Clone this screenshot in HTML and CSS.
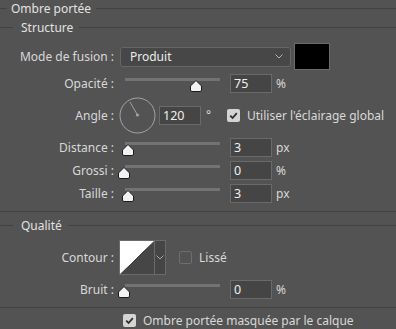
FILE: index.html
```html
<html>
  <head>
    <title>Ombre portée</title>
    <link rel="stylesheet" href="styles.css">
  </head>
  <body>
    <div class="panel">
      <div class="legend legend-main">
        <span class="legend-lead"></span><span class="legend-text">Ombre portée</span><span class="legend-line"></span>
      </div>

      <div class="legend legend-sub legend-structure">
        <span class="legend-lead"></span><span class="legend-text">Structure</span><span class="legend-line"></span>
      </div>

      <div class="row row-mode">
        <span class="label">Mode de fusion :</span>
        <div class="select">
          <span class="select-value">Produit</span>
          <svg class="chevron" width="8" height="5" viewBox="0 0 8 5"><path d="M0.5 0.5 L4 4 L7.5 0.5" fill="none" stroke="#b4b4b4" stroke-width="1"/></svg>
        </div>
        <div class="swatch"></div>
      </div>

      <div class="row row-field row-opacity">
        <span class="label">Opacité :</span>
        <div class="slider">
          <div class="track"></div>
          <span class="thumb" style="left: 65px"><svg width="12" height="12" viewBox="0 0 12 12"><path d="M6 0.5 L11.5 6 V10 Q11.5 11.5 10 11.5 H2 Q0.5 11.5 0.5 10 V6 Z" fill="#f2f2f2" stroke="#1c1c1c"/></svg></span>
        </div>
        <div class="input">75</div><span class="unit">%</span>
      </div>

      <div class="row row-angle">
        <span class="label">Angle :</span>
        <svg class="dial" width="37" height="37" viewBox="0 0 37 37">
          <circle cx="18.5" cy="18.5" r="17.5" fill="none" stroke="#a3a3a3" stroke-width="1"/>
          <line x1="18.5" y1="18" x2="11" y2="5" stroke="#a3a3a3" stroke-width="1"/>
          <circle cx="18.5" cy="18" r="1.6" fill="#a3a3a3"/>
        </svg>
        <div class="input">120</div><span class="unit unit-deg">°</span>
        <span class="check checked"><svg width="13" height="13" viewBox="0 0 13 13"><path d="M3.2 6.6 L5.6 9 L9.8 4.2" fill="none" stroke="#2e2e2e" stroke-width="1.8"/></svg></span>
        <span class="check-label">Utiliser l'éclairage global</span>
      </div>

      <div class="row row-field">
        <span class="label">Distance :</span>
        <div class="slider">
          <div class="track"></div>
          <span class="thumb" style="left: -3px"><svg width="12" height="12" viewBox="0 0 12 12"><path d="M6 0.5 L11.5 6 V10 Q11.5 11.5 10 11.5 H2 Q0.5 11.5 0.5 10 V6 Z" fill="#f2f2f2" stroke="#1c1c1c"/></svg></span>
        </div>
        <div class="input">3</div><span class="unit">px</span>
      </div>

      <div class="row row-field">
        <span class="label">Grossi :</span>
        <div class="slider">
          <div class="track"></div>
          <span class="thumb" style="left: -7px"><svg width="12" height="12" viewBox="0 0 12 12"><path d="M6 0.5 L11.5 6 V10 Q11.5 11.5 10 11.5 H2 Q0.5 11.5 0.5 10 V6 Z" fill="#f2f2f2" stroke="#1c1c1c"/></svg></span>
        </div>
        <div class="input">0</div><span class="unit">%</span>
      </div>

      <div class="row row-field">
        <span class="label">Taille :</span>
        <div class="slider">
          <div class="track"></div>
          <span class="thumb" style="left: -3px"><svg width="12" height="12" viewBox="0 0 12 12"><path d="M6 0.5 L11.5 6 V10 Q11.5 11.5 10 11.5 H2 Q0.5 11.5 0.5 10 V6 Z" fill="#f2f2f2" stroke="#1c1c1c"/></svg></span>
        </div>
        <div class="input">3</div><span class="unit">px</span>
      </div>

      <div class="separator separator-mid"></div>

      <div class="legend legend-sub legend-quality">
        <span class="legend-lead"></span><span class="legend-text">Qualité</span><span class="legend-line"></span>
      </div>

      <div class="row row-contour">
        <span class="label">Contour :</span>
        <div class="contour">
          <span class="contour-preview"></span>
          <span class="contour-arrow"><svg width="8" height="5" viewBox="0 0 8 5"><path d="M0.5 0.5 L4 4 L7.5 0.5" fill="none" stroke="#a8a8a8" stroke-width="1"/></svg></span>
        </div>
        <span class="check"></span>
        <span class="check-label">Lissé</span>
      </div>

      <div class="row row-field row-noise">
        <span class="label">Bruit :</span>
        <div class="slider">
          <div class="track"></div>
          <span class="thumb" style="left: -7px"><svg width="12" height="12" viewBox="0 0 12 12"><path d="M6 0.5 L11.5 6 V10 Q11.5 11.5 10 11.5 H2 Q0.5 11.5 0.5 10 V6 Z" fill="#f2f2f2" stroke="#1c1c1c"/></svg></span>
        </div>
        <div class="input">0</div><span class="unit">%</span>
      </div>

      <div class="separator separator-bottom"></div>

      <div class="row row-knockout">
        <span class="check checked"><svg width="13" height="13" viewBox="0 0 13 13"><path d="M3.2 6.6 L5.6 9 L9.8 4.2" fill="none" stroke="#2e2e2e" stroke-width="1.8"/></svg></span>
        <span class="check-label">Ombre portée masquée par le calque</span>
      </div>
    </div>
  </body>
</html>
```

FILE: styles.css
```css
body {
  margin: 0;
  background: #535353;
  font-family: "Noto Sans", "Open Sans", sans-serif;
  font-size: 12px;
  color: #d8d8d8;
}

.panel {
  width: 396px;
  height: 329px;
  overflow: hidden;
}

/* group titles with a rule on each side */
.legend {
  display: flex;
  align-items: center;
  height: 16px;
}

.legend-lead, .legend-line {
  height: 1px;
  background: #424242;
}

.legend-line {
  flex-grow: 1;
}

.legend-text {
  color: #e2e2e2;
  white-space: nowrap;
}

.legend-main .legend-lead {
  width: 7px;
  margin-right: 4px;
}

.legend-main .legend-line {
  margin-left: 5px;
}

.legend-sub .legend-lead {
  width: 13px;
  margin-right: 8px;
}

.legend-sub .legend-line {
  margin-left: 6px;
}

.legend-structure {
  margin-top: 3px;
}

.legend-quality {
  margin-top: 5px;
}

.separator {
  height: 1px;
  background: #424242;
}

.separator-mid {
  margin-top: 8px;
}

.separator-bottom {
  margin-top: 8px;
}

/* rows */
.row {
  display: flex;
  align-items: center;
}

.label {
  width: 114px;
  text-align: right;
  white-space: nowrap;
  flex-shrink: 0;
}

.row-mode {
  height: 27px;
  margin-top: 8px;
}

.row-field {
  height: 19px;
  margin-top: 4px;
}

.row-angle {
  height: 37px;
  margin-top: 4px;
}

.row-contour {
  height: 35px;
  margin-top: 7px;
}

.row-noise {
  margin-top: 5px;
}

.row-knockout {
  height: 18px;
  margin-top: 3px;
  padding-left: 123px;
}

/* blend mode select */
.select {
  box-sizing: border-box;
  width: 171px;
  height: 20px;
  margin-left: 6px;
  padding: 0 7px 0 9px;
  display: flex;
  align-items: center;
  justify-content: space-between;
  background: #474747;
  border: 1px solid #666;
  border-radius: 3px;
  color: #ececec;
}

.swatch {
  box-sizing: border-box;
  width: 36px;
  height: 27px;
  margin-left: 3px;
  background: #000;
  border: 1px solid #6a6a6a;
}

/* sliders */
.slider {
  position: relative;
  width: 95px;
  height: 19px;
  margin-left: 11px;
}

.track {
  margin-top: 4px;
  height: 3px;
  background: #737373;
}

.thumb {
  position: absolute;
  top: 6px;
  width: 12px;
  height: 12px;
}

.thumb svg {
  display: block;
}

.input {
  box-sizing: border-box;
  width: 42px;
  height: 19px;
  margin-left: 10px;
  padding-left: 3px;
  line-height: 17px;
  background: #454545;
  border: 1px solid #6a6a6a;
  color: #f0f0f0;
  font-size: 12.5px;
}

.unit {
  margin-left: 4px;
  color: #d8d8d8;
}

/* angle */
.dial {
  margin-left: 5px;
  flex-shrink: 0;
}

.row-angle .input {
  margin-left: 3px;
}

.unit-deg {
  width: 16px;
  margin-left: 5px;
  align-self: flex-start;
  margin-top: 9px;
}

.row-angle .check {
  margin-left: 5px;
}

/* checkboxes */
.check {
  box-sizing: border-box;
  width: 13px;
  height: 13px;
  border: 1px solid #6e6e6e;
  border-radius: 2px;
  flex-shrink: 0;
}

.check.checked {
  border: none;
  background: #d4d4d4;
}

.check svg {
  display: block;
}

.check-label {
  margin-left: 7px;
  white-space: nowrap;
}

/* contour */
.contour {
  box-sizing: border-box;
  display: flex;
  width: 47px;
  height: 35px;
  margin-left: 5px;
  margin-right: 13px;
  border: 1px solid #6a6a6a;
}

.contour-preview {
  width: 34px;
  background: linear-gradient(to bottom right, #ffffff 49.5%, #464646 50.5%);
}

.contour-arrow {
  flex-grow: 1;
  display: flex;
  align-items: center;
  justify-content: center;
  background: #454545;
  border-left: 1px solid #6a6a6a;
}

.contour-arrow svg {
  display: block;
}
```
